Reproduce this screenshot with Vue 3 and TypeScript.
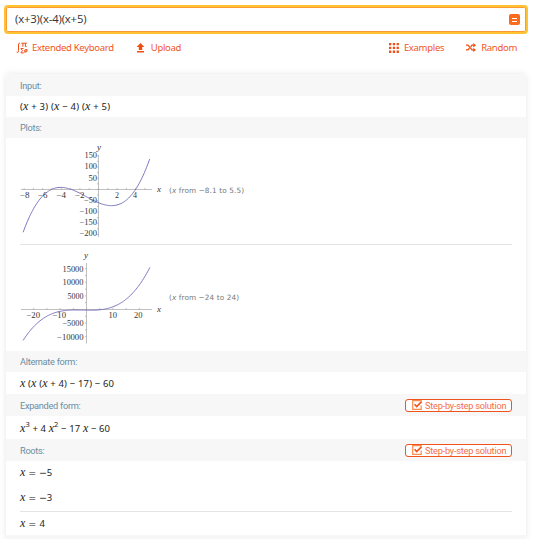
<script setup lang="ts">
interface Tick { x: number; y: number; t: string; w: number }
interface Plot {
  height: number
  axisX: number
  axisY: number
  top: number
  bottom: number
  curve: string
  ticksX: Tick[]
  ticksY: Tick[]
  minorX: number[]
  minorY: number[]
  yLabel: [number, number]
  xLabel: [number, number]
  captionY: number
  range: string
  rangeWidth: number
}

const f = (x: number): number => (x + 3) * (x - 4) * (x + 5)

function trace(from: number, to: number, ox: number, oy: number, sx: number, sy: number): string {
  const n = 120
  const pts: string[] = []
  for (let i = 0; i <= n; i++) {
    const x = from + ((to - from) * i) / n
    pts.push(`${(ox + x * sx).toFixed(2)},${(oy - f(x) * sy).toFixed(2)}`)
  }
  return pts.join(' ')
}

function steps(from: number, to: number, step: number): number[] {
  const out: number[] = []
  for (let v = from; v <= to; v += step) out.push(v)
  return out
}

const plots: Plot[] = [
  {
    height: 106,
    axisX: 98.5, axisY: 51.5, top: 17, bottom: 99,
    curve: trace(-8.1, 5.5, 98.5, 51.2, 9.3, 0.225),
    ticksX: [
      { x: 29.5, y: 60, t: '−8', w: 9.5 }, { x: 47.5, y: 60, t: '−6', w: 9.5 },
      { x: 66, y: 60, t: '−4', w: 9.5 }, { x: 84.5, y: 60, t: '−2', w: 9.5 },
      { x: 119, y: 60, t: '2', w: 4 }, { x: 137, y: 60, t: '4', w: 4 },
    ],
    ticksY: [
      { x: 97, y: 20, t: '150', w: 12.5 }, { x: 97, y: 31, t: '100', w: 12.5 },
      { x: 97, y: 42.5, t: '50', w: 8.5 }, { x: 97, y: 64.5, t: '−50', w: 13 },
      { x: 97, y: 76, t: '−100', w: 17.5 }, { x: 97, y: 87, t: '−150', w: 17.5 },
      { x: 97, y: 98, t: '−200', w: 17.5 },
    ],
    minorX: steps(-8, 5, 1).map((v) => 98.5 + v * 9.3),
    minorY: steps(-200, 150, 25).map((v) => 51.5 - v * 0.225),
    yLabel: [99, 11.5], xLabel: [159, 53.5],
    captionY: 54.5, range: ' from −8.1 to 5.5)', rangeWidth: 75,
  },
  {
    height: 106,
    axisX: 86.5, axisY: 65.5, top: 19, bottom: 99.5,
    curve: trace(-24, 24, 86.5, 66, 2.64, 0.00272),
    ticksX: [
      { x: 40, y: 74, t: '−20', w: 13.5 }, { x: 66, y: 74, t: '−10', w: 13.5 },
      { x: 117, y: 74, t: '10', w: 8.5 }, { x: 142.5, y: 74, t: '20', w: 8.5 },
    ],
    ticksY: [
      { x: 83.5, y: 27.5, t: '15000', w: 21 }, { x: 83.5, y: 41, t: '10000', w: 21 },
      { x: 83.5, y: 54.5, t: '5000', w: 16 }, { x: 83.5, y: 82, t: '−5000', w: 21 },
      { x: 83.5, y: 95.5, t: '−10000', w: 26.5 },
    ],
    minorX: steps(-20, 20, 5).map((v) => 86.5 + v * 2.64),
    minorY: steps(-10000, 15000, 2500).map((v) => 65.5 - v * 0.00272),
    yLabel: [86, 13.5], xLabel: [159, 68],
    captionY: 55.5, range: ' from −24 to 24)', rangeWidth: 70,
  },
]
</script>

<template>
  <main class="page">
    <div class="query">
      <span>(x+3)(x-4)(x+5)</span>
      <button class="equals" aria-label="Compute"><i></i><i></i></button>
    </div>

    <nav class="tools">
      <a class="keyboard">
        <svg width="12" height="12" viewBox="0 0 12 12">
          <g fill="none" stroke="#ef4e16" stroke-width="1">
            <path d="M4.2 1.6C3 .7 2.5 1.5 2.5 3v5.8c0 1.5-.6 2-1.9 1.3M5.4 1.2h5.4M6.9 1.2v3.6M9.4 1.2v3.4h1.2M7.6 6.5H4.9L6.5 8.7 4.9 10.9H7.8" />
            <circle cx="9.8" cy="8.8" r="1.3" /><path d="M8.4 10.5 11.3 7.1" />
          </g>
        </svg>
        <span>Extended Keyboard</span>
      </a>
      <a class="upload">
        <svg width="9" height="10" viewBox="0 0 9 10" fill="#ef4e16"><path d="M4.5 0 8.4 3.9H6.2V7H2.8V3.9H.6zM1 8h7v1.5H1z" /></svg>
        <span>Upload</span>
      </a>
      <a class="examples">
        <svg width="10" height="10" viewBox="0 0 10 10" fill="#ef4e16"><path d="M0 0h2.3v2.3H0zM3.8 0h2.3v2.3H3.8zM7.6 0h2.3v2.3H7.6zM0 3.8h2.3v2.3H0zM3.8 3.8h2.3v2.3H3.8zM7.6 3.8h2.3v2.3H7.6zM0 7.6h2.3v2.3H0zM3.8 7.6h2.3v2.3H3.8zM7.6 7.6h2.3v2.3H7.6z" /></svg>
        <span>Examples</span>
      </a>
      <a class="random">
        <svg width="10" height="9" viewBox="0 0 10 9"><path d="M0 2.2h2L6 6.9H8M0 6.9h2L3.4 5.3M4.7 3.7 6 2.2H8" fill="none" stroke="#ef4e16" stroke-width="1.3" /><path d="M7.3 0l2.7 2.2-2.7 2.2zM7.3 4.7l2.7 2.2-2.7 2.1z" fill="#ef4e16" /></svg>
        <span>Random</span>
      </a>
    </nav>

    <section class="card">
      <h2 class="h22">Input:</h2>
      <div class="row r21">
        <svg class="math" width="130" height="21"><text x="0" y="14" textLength="90">(<tspan class="v">x</tspan> + 3) (<tspan class="v">x</tspan> − 4) (<tspan class="v">x</tspan> + 5)</text></svg>
      </div>

      <h2>Plots:</h2>
      <div class="plots">
        <svg v-for="(p, i) in plots" :key="i" class="plot" width="520" :height="p.height" :viewBox="`6 0 520 ${p.height}`">
          <path v-if="i > 0" class="rule" d="M20 .5H512" />
          <g class="axes">
            <path :d="`M21 ${p.axisY}H152M${p.axisX} ${p.top}V${p.bottom}`" />
            <path v-for="m in p.minorX" :key="'x' + m" :d="`M${m} ${p.axisY}v-1.5`" />
            <path v-for="m in p.minorY" :key="'y' + m" :d="`M${p.axisX} ${m}h-1.5`" />
          </g>
          <polyline class="curve" :points="p.curve" />
          <g class="ticks">
            <text v-for="t in p.ticksX" :key="'a' + t.t" :x="t.x" :y="t.y" text-anchor="end" :textLength="t.w" lengthAdjust="spacingAndGlyphs">{{ t.t }}</text>
            <text v-for="t in p.ticksY" :key="'b' + t.t" :x="t.x" :y="t.y" text-anchor="end" :textLength="t.w" lengthAdjust="spacingAndGlyphs">{{ t.t }}</text>
            <text class="v" :x="p.yLabel[0]" :y="p.yLabel[1]" text-anchor="middle">y</text>
            <text class="v" :x="p.xLabel[0]" :y="p.xLabel[1]" text-anchor="middle">x</text>
          </g>
          <text class="caption" x="169" :y="p.captionY" :textLength="p.rangeWidth">(<tspan class="it">x</tspan>{{ p.range }}</text>
        </svg>
      </div>

      <h2>Alternate form:</h2>
      <div class="row r22">
        <svg class="math" width="130" height="22"><text x="0" y="14.5" textLength="94"><tspan class="v">x</tspan> (<tspan class="v">x</tspan> (<tspan class="v">x</tspan> + 4) − 17) − 60</text></svg>
      </div>

      <h2 class="h22">
        Expanded form:
        <button class="step">
          <svg width="10" height="10" viewBox="0 0 10 10" fill="none"><path d="M9.2 5.5v3.8H.7V.7h8.5v1" stroke="#fa8c4e" stroke-width="1.2" /><path d="m2.6 4.3 2.1 2.3L9.5 1.8" stroke="#f0541d" stroke-width="1.7" /></svg>
          <span>Step-by-step solution</span>
        </button>
      </h2>
      <div class="row r23">
        <svg class="math" width="130" height="23"><text x="0" y="15.5" textLength="90"><tspan class="v">x</tspan><tspan class="sup" dy="-5">3</tspan><tspan dy="5"> + 4 </tspan><tspan class="v">x</tspan><tspan class="sup" dy="-5">2</tspan><tspan dy="5"> − 17 </tspan><tspan class="v">x</tspan> − 60</text></svg>
      </div>

      <h2 class="h22">
        Roots:
        <button class="step">
          <svg width="10" height="10" viewBox="0 0 10 10" fill="none"><path d="M9.2 5.5v3.8H.7V.7h8.5v1" stroke="#fa8c4e" stroke-width="1.2" /><path d="m2.6 4.3 2.1 2.3L9.5 1.8" stroke="#f0541d" stroke-width="1.7" /></svg>
          <span>Step-by-step solution</span>
        </button>
      </h2>
      <div class="roots">
        <div class="root"><svg class="math" width="60" height="24"><text x="0" y="15"><tspan class="v">x</tspan><tspan class="op" x="8.3">=</tspan><tspan class="op" x="19">−</tspan><tspan x="26.7">5</tspan></text></svg></div>
        <div class="root"><svg class="math" width="60" height="24"><text x="0" y="15"><tspan class="v">x</tspan><tspan class="op" x="8.3">=</tspan><tspan class="op" x="19">−</tspan><tspan x="26.7">3</tspan></text></svg></div>
        <div class="root line"><svg class="math" width="60" height="24"><text x="0" y="15"><tspan class="v">x</tspan><tspan class="op" x="8.3">=</tspan><tspan x="19.5">4</tspan></text></svg></div>
      </div>
      <div class="foot"></div>
    </section>
  </main>
</template>

<style>
body { background: #fff; overflow: hidden; }
</style>

<style scoped>
* { box-sizing: border-box; }
.page { width: 535px; height: 539px; padding: 5px 0 0 4px; overflow: hidden; font-family: Roboto, sans-serif; }
.query {
  width: 524px; height: 29px; padding: 0 6px 0 9px; display: flex; align-items: center; justify-content: space-between;
  border: 2px solid #ffc230; border-radius: 4px; box-shadow: inset 0 0 0 1px #fb9a35;
  font: 11.3px "Open Sans", sans-serif; letter-spacing: -0.15px; color: #333;
}
.query span { padding-bottom: 3px; }
.equals { width: 11px; height: 11px; padding: 0 3px; border: 0; border-radius: 2px; background: #f96c1e; display: flex; flex-direction: column; justify-content: center; gap: 2px; }
.equals i { height: 1px; background: #fff; }
.tools { display: flex; height: 27px; align-items: center; padding-left: 12px; font: 9.5px "Noto Sans", sans-serif; letter-spacing: -0.3px; color: #f0561f; }
.tools a { display: flex; align-items: center; gap: 4px; white-space: nowrap; }
.upload { margin-left: 22px; }
.tools .upload { gap: 6px; }
.examples { margin-left: auto; }
.tools .examples, .tools .random { gap: 5px; }
.random { margin-left: 22px; margin-right: 18px; }
.card { margin: 13px 0 0 2px; width: 520px; background: #fff; box-shadow: 0 0 6px rgba(0, 0, 0, 0.1); border-radius: 3px 3px 0 0; overflow: hidden; }
h2 { margin: 0; height: 21px; padding: 0 14px; display: flex; align-items: center; justify-content: space-between; background: #f7f7f7; color: #6b8ea5; font: 9.2px Roboto, sans-serif; letter-spacing: -0.28px; }
.h22 { height: 22px; }
.row { padding-left: 14px; }
.r21 { height: 21px; }
.r22 { height: 22px; }
.r23 { height: 23px; }
.math { display: block; overflow: visible; font: 9.5px "Noto Sans", sans-serif; fill: #222; }
.v { font-family: "Liberation Serif", serif; font-style: italic; }
.math .v { font-size: 12px; }
.op { font: 9.5px "DejaVu Sans", sans-serif; }
.sup { font-size: 7.5px; }
.plots { height: 213px; }
.plot { display: block; }
.rule { stroke: #e4e4e4; }
.axes { fill: none; stroke: #a5a5a5; stroke-width: 0.7; }
.ticks { font: 8px "Liberation Serif", serif; fill: #333; }
.ticks .v { font-size: 9px; }
.curve { fill: none; stroke: #6f69b8; stroke-width: 0.9; }
.caption { font: 7.3px "DejaVu Sans", sans-serif; fill: #777; }
.it { font-style: italic; }
.step { width: 107px; height: 13px; padding: 0 0 0 6px; border: 1px solid #f0541d; border-radius: 3px; background: #fff; color: #f56e48; display: flex; align-items: center; gap: 3px; font: 9.2px Roboto, sans-serif; letter-spacing: -0.22px; white-space: nowrap; }
.roots { height: 74px; padding: 0 14px; }
.root { height: 25px; }
.line { border-top: 1px solid #e4e4e4; height: 24px; }
.foot { height: 4px; background: #f7f7f7; }
</style>
